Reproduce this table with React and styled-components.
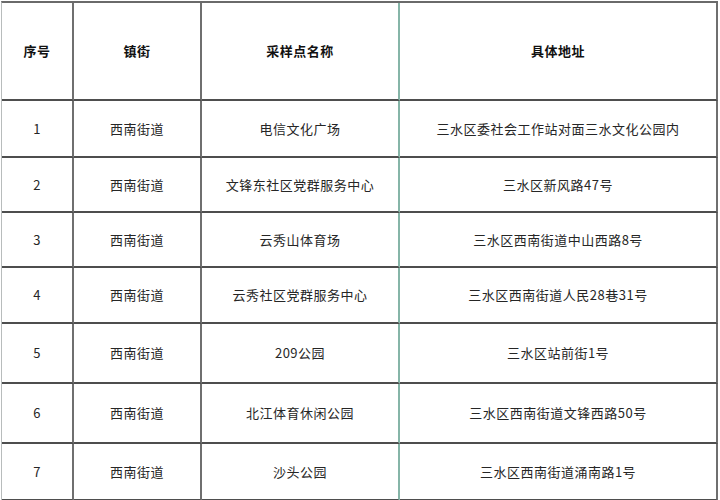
import React from "react";
import styled, { createGlobalStyle } from "styled-components";

const Global = createGlobalStyle`
  html, body { margin: 0; padding: 0; background: #fff; }
  body { font-family: "Noto Sans CJK SC", "Liberation Sans", sans-serif; }
`;

const Table = styled.div`
  margin: 1px 0 0 1px;
  width: 716px;
  border-left: 1px solid #b8bcbc;
  border-top: 2px solid #6a6a6a;
`;

const Row = styled.div`
  display: grid;
  grid-template-columns: 72px 128px 198px 318px;
  height: ${(p) => p.$h}px;
  box-sizing: border-box;
`;

const Cell = styled.div`
  box-sizing: border-box;
  display: flex;
  align-items: center;
  justify-content: center;
  border-right: 2px solid ${(p) => (p.$teal ? "#86b5a8" : "#6f6f6f")};
  border-bottom: 2px solid #4e4e4e;
  font-size: 13px;
  letter-spacing: 0.5px;
  color: ${(p) => (p.$head ? "#111" : "#262626")};
  font-weight: ${(p) => (p.$head ? 700 : 400)};
  white-space: nowrap;
  padding-bottom: 1px;
`;

const heads = ["序号", "镇街", "采样点名称", "具体地址"];

const rows = [
  ["1", "西南街道", "电信文化广场", "三水区委社会工作站对面三水文化公园内", 57],
  ["2", "西南街道", "文锋东社区党群服务中心", "三水区新风路47号", 55],
  ["3", "西南街道", "云秀山体育场", "三水区西南街道中山西路8号", 55],
  ["4", "西南街道", "云秀社区党群服务中心", "三水区西南街道人民28巷31号", 56],
  ["5", "西南街道", "209公园", "三水区站前街1号", 60],
  ["6", "西南街道", "北江体育休闲公园", "三水区西南街道文锋西路50号", 60],
  ["7", "西南街道", "沙头公园", "三水区西南街道涌南路1号", 57],
];

export default function App() {
  return (
    <>
      <Global />
      <Table>
        <Row $h={98}>
          {heads.map((h, i) => (
            <Cell key={h} $head $teal={i === 2}>
              {h}
            </Cell>
          ))}
        </Row>
        {rows.map((r) => (
          <Row key={r[0]} $h={r[4]}>
            {r.slice(0, 4).map((c, i) => (
              <Cell key={i} $teal={i === 2}>
                {c}
              </Cell>
            ))}
          </Row>
        ))}
      </Table>
    </>
  );
}
